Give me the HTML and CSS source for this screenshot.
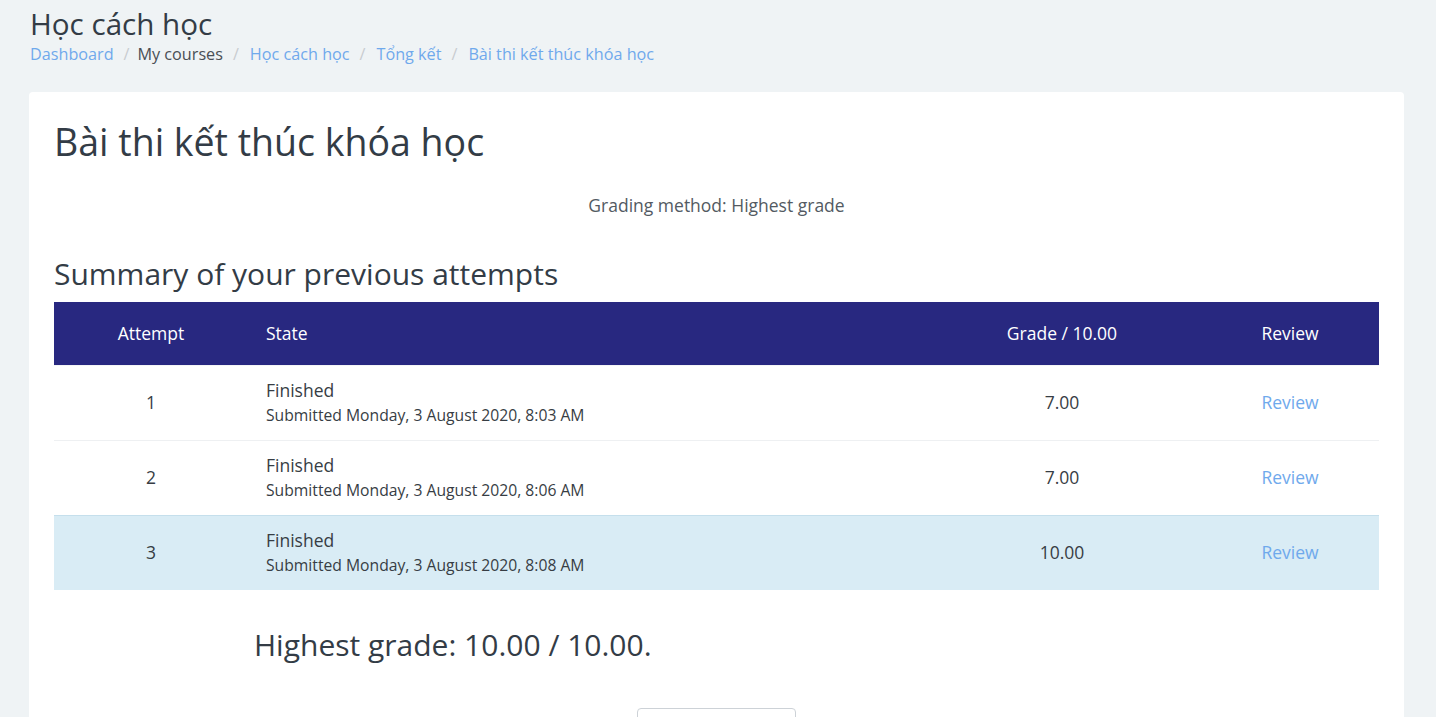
FILE: index.html
```html
<!DOCTYPE html>
<html lang="vi">
<head>
<meta charset="utf-8">
<title>Bài thi kết thúc khóa học</title>
<link rel="stylesheet" href="styles.css">
</head>
<body>
<header class="page-header">
  <h1 class="course-title">Học cách học</h1>
  <nav class="breadcrumb">
    <a href="#">Dashboard</a><span class="sep sep-first">/</span>
    <span class="crumb-text">My courses</span><span class="sep">/</span>
    <a href="#">Học cách học</a><span class="sep">/</span>
    <a href="#">Tổng kết</a><span class="sep">/</span>
    <a href="#">Bài thi kết thúc khóa học</a>
  </nav>
</header>
<main class="card">
  <h2 class="quiz-title">Bài thi kết thúc khóa học</h2>
  <p class="grading">Grading method: Highest grade</p>
  <h3 class="summary-title">Summary of your previous attempts</h3>
  <table class="attempts">
    <colgroup>
      <col class="c-attempt"><col><col class="c-grade"><col class="c-review">
    </colgroup>
    <thead>
      <tr><th class="center">Attempt</th><th class="left">State</th><th class="center">Grade / 10.00</th><th class="center">Review</th></tr>
    </thead>
    <tbody>
      <tr>
        <td class="center">1</td>
        <td class="left"><div class="state">Finished</div><div class="sub">Submitted Monday, 3 August 2020, 8:03 AM</div></td>
        <td class="center">7.00</td>
        <td class="center"><a href="#">Review</a></td>
      </tr>
      <tr>
        <td class="center">2</td>
        <td class="left"><div class="state">Finished</div><div class="sub">Submitted Monday, 3 August 2020, 8:06 AM</div></td>
        <td class="center">7.00</td>
        <td class="center"><a href="#">Review</a></td>
      </tr>
      <tr class="best">
        <td class="center">3</td>
        <td class="left"><div class="state">Finished</div><div class="sub">Submitted Monday, 3 August 2020, 8:08 AM</div></td>
        <td class="center">10.00</td>
        <td class="center"><a href="#">Review</a></td>
      </tr>
    </tbody>
  </table>
  <h3 class="highest">Highest grade: 10.00 / 10.00.</h3>
  <div class="actions"><button class="btn" type="button"></button></div>
</main>
</body>
</html>
```
FILE: styles.css
```css
html, body {
  margin: 0;
  padding: 0;
}
body {
  background: #eff3f5;
  font-family: "Open Sans", "Noto Sans", sans-serif;
  color: #333c46;
  overflow: hidden;
  height: 717px;
}
.page-header {
  padding: 0 30px;
}
.course-title {
  margin: 6px 0 0;
  font-size: 29.6px;
  font-weight: 400;
  line-height: 1.2;
  color: #333c46;
}
.breadcrumb {
  margin-top: 0;
  font-size: 16.2px;
  line-height: 1.5;
  display: flex;
  align-items: center;
}
.breadcrumb a {
  color: #6fa9ec;
  text-decoration: none;
}
.crumb-text {
  color: #4a4f55;
}
.sep {
  color: #c8ccd0;
  padding: 0 11px 0 10px;
}
.sep-first {
  padding-right: 8px;
}
.card {
  margin: 26px 32px 0 29px;
  background: #fff;
  border-radius: 4px;
  padding: 27px 25px 0;
  height: 800px;
}
.quiz-title {
  margin: 0;
  font-size: 37.5px;
  font-weight: 400;
  line-height: 1.2;
  color: #333c46;
}
.grading {
  margin: 28px 0 0;
  text-align: center;
  font-size: 17.5px;
  line-height: 1.5;
  color: #535a62;
}
.summary-title {
  margin: 38px 0 0;
  font-size: 30px;
  font-weight: 400;
  line-height: 1.2;
  color: #333c46;
}
.attempts {
  margin-top: 10px;
  width: 100%;
  border-collapse: collapse;
  table-layout: fixed;
  font-size: 17.5px;
}
.c-attempt { width: 194px; }
.c-grade { width: 278px; }
.c-review { width: 178px; }
.attempts th {
  background: #282880;
  color: #fff;
  font-weight: 400;
  height: 63px;
  padding: 0 12px;
  box-sizing: border-box;
}
.attempts td {
  height: 75px;
  padding: 0 12px 2px 18px;
  box-sizing: border-box;
  border-top: 1px solid #eef0f2;
  color: #373d44;
}
.attempts th.left { padding-left: 18px; }
.attempts td.center { padding: 0 12px 2px; }
.attempts tbody tr:first-child td { border-top: 1px solid #f4f5f6; }
.center { text-align: center; }
.left { text-align: left; }
.attempts tr.best td {
  background: #d9ecf5;
  border-top-color: #c5dfec;
}
.state {
  font-size: 17.5px;
  line-height: 25px;
}
.sub {
  font-size: 15.7px;
  line-height: 22px;
  margin-top: 1px;
}
.attempts a {
  color: #6fa9ec;
  text-decoration: none;
}
.highest {
  margin: 37px 0 0 200px;
  font-size: 30px;
  font-weight: 400;
  line-height: 1.2;
  color: #333c46;
}
.actions {
  margin-top: 45px;
  display: flex;
  justify-content: center;
}
.btn {
  width: 159px;
  height: 38px;
  background: #fff;
  border: 1px solid #cdd2d7;
  border-radius: 4px;
  font-family: inherit;
  font-size: 15px;
  color: #373d44;
}
```
